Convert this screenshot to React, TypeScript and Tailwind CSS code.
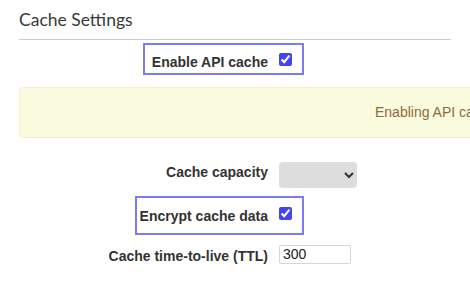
export default function App() {
  return (
    <div className="w-[470px] h-[281px] overflow-hidden bg-white px-[19px] font-['Liberation_Sans',Arial,sans-serif] text-[#333]">
      <h2 className="pt-[8px] pb-[7px] border-b border-[#ccc] font-['Lato',sans-serif] text-[17.5px] leading-[24px] text-[#3a3a3a]">
        Cache Settings
      </h2>

      {/* enable api cache */}
      <div className="mt-[3px] ml-[124px] w-[161px] h-[32px] border-2 border-[#7b7bf7] flex items-center justify-end pr-[10px] gap-[11px]">
        <label className="translate-y-[3px] text-[14px] font-bold">Enable API cache</label>
        <input type="checkbox" defaultChecked className="w-[13px] h-[13px] m-0 accent-[#4343f2]" />
      </div>

      <div className="mt-[12px] h-[51px] w-[480px] rounded-[4px] border border-[#f6efcf] bg-[#fafadf] flex items-center pl-[355px] whitespace-nowrap text-[14px] text-[#8a6d3b]">
        Enabling API cache will reduce the number of requests
      </div>

      {/* cache capacity */}
      <div className="mt-[24px] flex items-center gap-[11px]">
        <label className="w-[249px] -translate-y-[3px] text-right text-[14px] font-bold">Cache capacity</label>
        <select className="w-[78px] h-[26px] pr-[6px] rounded-[4px] bg-[#dddddd] text-[14px]"></select>
      </div>

      {/* encrypt */}
      <div className="mt-[8px] ml-[116px] w-[169px] h-[39px] border-2 border-[#7b7bf7] flex items-center justify-end pr-[10px] gap-[11px]">
        <label className="translate-y-[1px] text-[14px] font-bold">Encrypt cache data</label>
        <input type="checkbox" defaultChecked className="w-[13px] h-[13px] m-0 -translate-y-[2px] accent-[#4343f2]" />
      </div>

      {/* ttl */}
      <div className="mt-[9px] flex items-center gap-[11px]">
        <label className="w-[249px] translate-y-[2px] text-right text-[14px] font-bold">Cache time-to-live (TTL)</label>
        <input
          type="text"
          defaultValue="300"
          className="w-[72px] h-[19px] rounded-[2px] border border-[#d6d6d6] px-[3px] text-[14px] text-[#222]"
        />
      </div>
    </div>
  );
}
